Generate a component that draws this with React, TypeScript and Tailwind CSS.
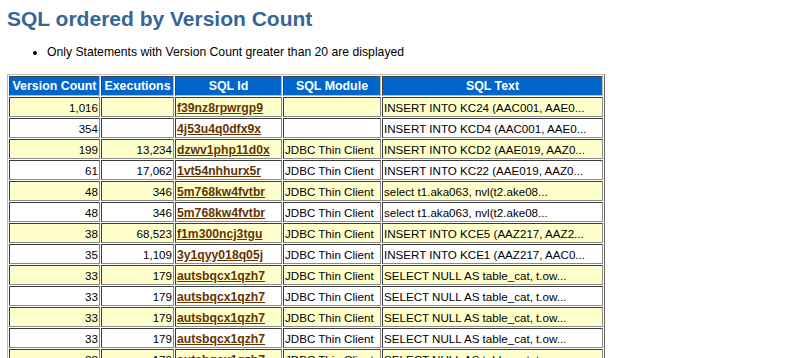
import React from "react";

type Row = [string, string, string, string, string];

const rows: Row[] = [
  ["1,016", "", "f39nz8rpwrgp9", "", "INSERT INTO KC24 (AAC001, AAE0..."],
  ["354", "", "4j53u4q0dfx9x", "", "INSERT INTO KCD4 (AAC001, AAE0..."],
  ["199", "13,234", "dzwv1php11d0x", "JDBC Thin Client", "INSERT INTO KCD2 (AAE019, AAZ0..."],
  ["61", "17,062", "1vt54nhhurx5r", "JDBC Thin Client", "INSERT INTO KC22 (AAE019, AAZ0..."],
  ["48", "346", "5m768kw4fvtbr", "JDBC Thin Client", "select t1.aka063, nvl(t2.ake08..."],
  ["48", "346", "5m768kw4fvtbr", "JDBC Thin Client", "select t1.aka063, nvl(t2.ake08..."],
  ["38", "68,523", "f1m300ncj3tgu", "JDBC Thin Client", "INSERT INTO KCE5 (AAZ217, AAZ2..."],
  ["35", "1,109", "3y1qyy018q05j", "JDBC Thin Client", "INSERT INTO KCE1 (AAZ217, AAC0..."],
  ["33", "179", "autsbqcx1qzh7", "JDBC Thin Client", "SELECT NULL AS table_cat, t.ow..."],
  ["33", "179", "autsbqcx1qzh7", "JDBC Thin Client", "SELECT NULL AS table_cat, t.ow..."],
  ["33", "179", "autsbqcx1qzh7", "JDBC Thin Client", "SELECT NULL AS table_cat, t.ow..."],
  ["33", "179", "autsbqcx1qzh7", "JDBC Thin Client", "SELECT NULL AS table_cat, t.ow..."],
  ["33", "179", "autsbqcx1qzh7", "JDBC Thin Client", "SELECT NULL AS table_cat, t.ow..."],
  ["33", "179", "autsbqcx1qzh7", "JDBC Thin Client", "SELECT NULL AS table_cat, t.ow..."],
];

const th =
  "bg-[#0066cc] text-white font-bold text-[12.4px] text-center h-[20px] p-0 border border-t-[#444] border-l-[#444] border-b-[#bbb] border-r-[#bbb] leading-none whitespace-nowrap overflow-hidden";
const tdBase =
  "text-[11.6px] text-black h-[20px] p-0 border border-t-[#3a3a3a] border-l-[#3a3a3a] border-b-[#8a8a8a] border-r-[#8a8a8a] leading-none whitespace-nowrap overflow-hidden";

export default function App() {
  return (
    <div className="bg-white w-[794px] h-[358px] overflow-hidden font-['Liberation_Sans',Arial,sans-serif] text-black">
      <h1 className="text-[#336699] font-bold text-[21px] leading-none pl-[7px] pt-[8px]">
        SQL ordered by Version Count
      </h1>
      <ul className="list-disc pl-[47px] mt-[17px] text-[12.2px] leading-none">
        <li>Only Statements with Version Count greater than 20 are displayed</li>
      </ul>
      <table className="ml-[7px] mt-[16px] border-separate border-spacing-[1px] border border-t-[#bbb] border-l-[#bbb] border-b-[#666] border-r-[#666] w-[598px] table-fixed">
        <colgroup>
          <col className="w-[91px]" />
          <col className="w-[73px]" />
          <col className="w-[107px]" />
          <col className="w-[98px]" />
          <col className="w-[221px]" />
        </colgroup>
        <thead>
          <tr>
            <th className={th}>Version Count</th>
            <th className={th}>Executions</th>
            <th className={th}>SQL Id</th>
            <th className={th}>SQL Module</th>
            <th className={th}>SQL Text</th>
          </tr>
        </thead>
        <tbody>
          {rows.map((r, i) => {
            const bg = i % 2 === 0 ? "bg-[#ffffcc]" : "bg-white";
            return (
              <tr key={i}>
                <td className={`${tdBase} ${bg} text-right pr-[1px] pt-[1px]`}>{r[0]}</td>
                <td className={`${tdBase} ${bg} text-right pr-[1px] pt-[1px]`}>{r[1]}</td>
                <td className={`${tdBase} ${bg} text-left pl-[1px] pt-[1px]`}>
                  <a className="font-bold text-[12.2px] text-[#663300] underline" href="#">
                    {r[2]}
                  </a>
                </td>
                <td className={`${tdBase} ${bg} text-left pl-[1px] pt-[1px]`}>{r[3]}</td>
                <td className={`${tdBase} ${bg} text-left pl-[1px] pt-[1px]`}>{r[4]}</td>
              </tr>
            );
          })}
        </tbody>
      </table>
    </div>
  );
}
